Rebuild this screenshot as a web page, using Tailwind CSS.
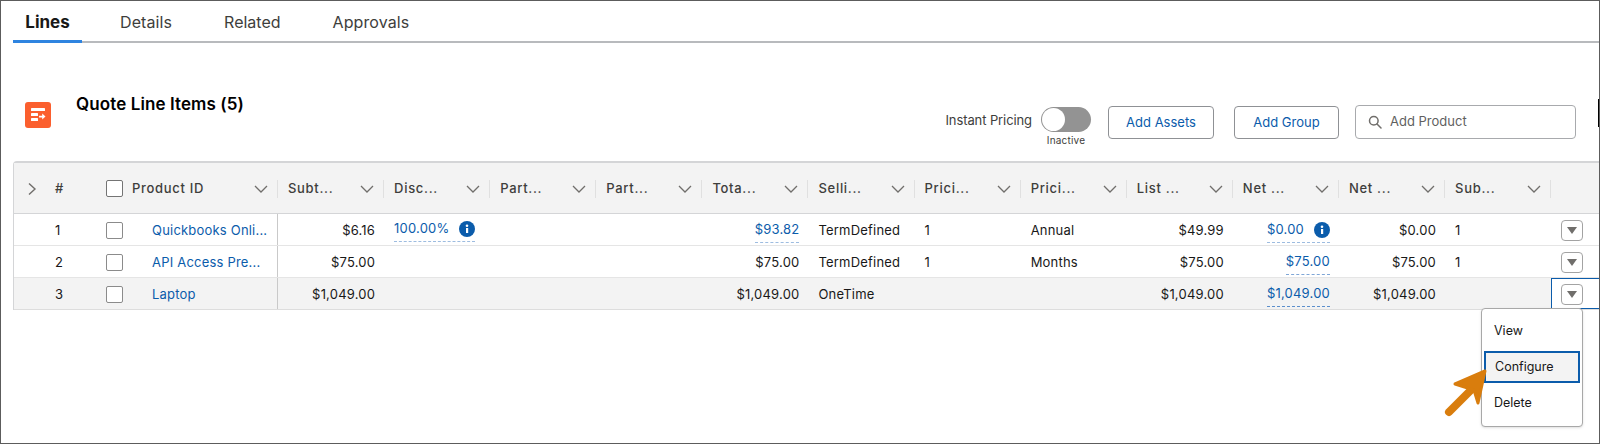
<!DOCTYPE html>
<html lang="en">
<head>
  <meta charset="UTF-8">
  <title>Quote Line Items</title>
  <script src="https://cdn.jsdelivr.net/npm/@tailwindcss/browser@4"></script>
</head>
<body class="bg-white font-['Inter',sans-serif] text-[13px] text-[#181818]">
  <div class="relative w-[1600px] h-[444px] overflow-hidden border border-[#5c5c5c]">

    <!-- tabs -->
    <div class="ml-3 h-[42px] flex items-start border-b-2 border-[#b8babd] text-[16px] text-[#3e3e3c]">
      <div class="w-[69px] h-[42px] pt-[9px] text-center text-[17px] font-bold text-[#181818] border-b-[3px] border-[#2e84e0]">Lines</div>
      <div class="ml-[38px] pt-[9px] tracking-[0.1px]">Details</div>
      <div class="ml-[52px] pt-[9px]">Related</div>
      <div class="ml-[52px] pt-[9px] tracking-[0.1px]">Approvals</div>
    </div>

    <!-- toolbar -->
    <div class="h-[118px] flex items-start pl-6 pr-[23px]">
      <div class="mt-[59px] w-[26px] h-[26px] rounded-[3px] bg-[#fb5f2e] flex items-center justify-center">
        <svg width="20" height="20" viewBox="0 0 20 20" fill="#fff">
          <rect x="3" y="3" width="14" height="3" rx="0.6"/>
          <rect x="3" y="8" width="7" height="3" rx="0.6"/>
          <rect x="3" y="13" width="7" height="3" rx="0.6"/>
          <path d="M11 10.7h3.2V8.6l3.3 3-3.3 3v-2.1H11z"/>
        </svg>
      </div>
      <div class="ml-[25px] mt-[49px] text-[17px] leading-[24px] font-semibold tracking-[0.1px] text-black">Quote Line Items (5)</div>
      <div class="ml-auto mt-[64px] flex items-start">
        <div class="mt-[3px] text-[13px] leading-[20px] tracking-[-0.1px] text-[#3e3e3c]">Instant Pricing</div>
        <div class="ml-[9px] w-[50px] flex flex-col items-center">
          <div class="w-[50px] h-[25px] rounded-full bg-[#939393] p-[1px]">
            <div class="w-[23px] h-[23px] rounded-full bg-white"></div>
          </div>
          <div class="mt-[1px] text-[10px] leading-[14px] tracking-[0.2px] text-[#3e3e3c]">Inactive</div>
        </div>
        <button class="ml-[17px] mt-[-1px] w-[106px] h-[33px] rounded border border-[#8f9195] text-[#0b5cab]">Add Assets</button>
        <button class="ml-[20px] mt-[-1px] w-[105px] h-[33px] rounded border border-[#8f9195] text-[#0b5cab]">Add Group</button>
        <div class="ml-[16px] mt-[-2px] w-[221px] h-[34px] rounded border border-[#a8aaad] flex items-center pl-3 text-[#5f5f5f]">
          <svg width="14" height="14" viewBox="0 0 14 14" fill="none" stroke="#706e6b" stroke-width="1.5"><circle cx="5.8" cy="5.8" r="4.3"/><path d="M9 9l4 4" stroke-linecap="round"/></svg>
          <span class="ml-[8px]">Add Product</span>
        </div>
      </div>
    </div>

    <!-- table -->
    <div class="ml-3 border-t-2 border-l border-[#d4d5d7] rounded-tl">
      <!-- header -->
      <div class="h-[51px] pt-[1px] grid grid-cols-[264px_repeat(12,106.1px)_1fr] items-center bg-[#f3f3f3] border-b border-[#d4d5d7] font-medium text-[#3e3e3c] tracking-[0.7px]">
        <div class="h-[18px] flex items-center border-r border-[#e0e0e0]">
          <svg class="ml-[12px]" width="12" height="14" viewBox="0 0 12 14" fill="none" stroke="#706e6b" stroke-width="1.4"><path d="M3 1.5l6 5.5-6 5.5"/></svg>
          <span class="ml-[17px]">#</span>
          <span class="ml-[42px] w-[17px] h-[17px] rounded-[2px] border border-[#747474] bg-white"></span>
          <span class="ml-[9px]">Product ID</span>
          <svg class="ml-auto mr-[9px]" width="14" height="8" viewBox="0 0 14 8" fill="none" stroke="#706e6b" stroke-width="1.3"><path d="M1 1l6 6 6-6"/></svg>
        </div>
        <div class="h-[18px] flex items-center pl-[10px] pr-[9px] justify-between border-r border-[#e0e0e0]">Subt...<svg width="14" height="8" viewBox="0 0 14 8" fill="none" stroke="#706e6b" stroke-width="1.3"><path d="M1 1l6 6 6-6"/></svg></div>
        <div class="h-[18px] flex items-center pl-[10px] pr-[9px] justify-between border-r border-[#e0e0e0]">Disc...<svg width="14" height="8" viewBox="0 0 14 8" fill="none" stroke="#706e6b" stroke-width="1.3"><path d="M1 1l6 6 6-6"/></svg></div>
        <div class="h-[18px] flex items-center pl-[10px] pr-[9px] justify-between border-r border-[#e0e0e0]">Part...<svg width="14" height="8" viewBox="0 0 14 8" fill="none" stroke="#706e6b" stroke-width="1.3"><path d="M1 1l6 6 6-6"/></svg></div>
        <div class="h-[18px] flex items-center pl-[10px] pr-[9px] justify-between border-r border-[#e0e0e0]">Part...<svg width="14" height="8" viewBox="0 0 14 8" fill="none" stroke="#706e6b" stroke-width="1.3"><path d="M1 1l6 6 6-6"/></svg></div>
        <div class="h-[18px] flex items-center pl-[10px] pr-[9px] justify-between border-r border-[#e0e0e0]">Tota...<svg width="14" height="8" viewBox="0 0 14 8" fill="none" stroke="#706e6b" stroke-width="1.3"><path d="M1 1l6 6 6-6"/></svg></div>
        <div class="h-[18px] flex items-center pl-[10px] pr-[9px] justify-between border-r border-[#e0e0e0]">Selli...<svg width="14" height="8" viewBox="0 0 14 8" fill="none" stroke="#706e6b" stroke-width="1.3"><path d="M1 1l6 6 6-6"/></svg></div>
        <div class="h-[18px] flex items-center pl-[10px] pr-[9px] justify-between border-r border-[#e0e0e0]">Prici...<svg width="14" height="8" viewBox="0 0 14 8" fill="none" stroke="#706e6b" stroke-width="1.3"><path d="M1 1l6 6 6-6"/></svg></div>
        <div class="h-[18px] flex items-center pl-[10px] pr-[9px] justify-between border-r border-[#e0e0e0]">Prici...<svg width="14" height="8" viewBox="0 0 14 8" fill="none" stroke="#706e6b" stroke-width="1.3"><path d="M1 1l6 6 6-6"/></svg></div>
        <div class="h-[18px] flex items-center pl-[10px] pr-[9px] justify-between border-r border-[#e0e0e0]">List ...<svg width="14" height="8" viewBox="0 0 14 8" fill="none" stroke="#706e6b" stroke-width="1.3"><path d="M1 1l6 6 6-6"/></svg></div>
        <div class="h-[18px] flex items-center pl-[10px] pr-[9px] justify-between border-r border-[#e0e0e0]">Net ...<svg width="14" height="8" viewBox="0 0 14 8" fill="none" stroke="#706e6b" stroke-width="1.3"><path d="M1 1l6 6 6-6"/></svg></div>
        <div class="h-[18px] flex items-center pl-[10px] pr-[9px] justify-between border-r border-[#e0e0e0]">Net ...<svg width="14" height="8" viewBox="0 0 14 8" fill="none" stroke="#706e6b" stroke-width="1.3"><path d="M1 1l6 6 6-6"/></svg></div>
        <div class="h-[18px] flex items-center pl-[10px] pr-[9px] justify-between border-r border-[#e0e0e0]">Sub...<svg width="14" height="8" viewBox="0 0 14 8" fill="none" stroke="#706e6b" stroke-width="1.3"><path d="M1 1l6 6 6-6"/></svg></div>
        <div></div>
      </div>

      <!-- row 1 -->
      <div class="h-[32px] pt-[2px] grid grid-cols-[264px_repeat(12,106.1px)_1fr] items-center border-b border-[#e5e5e5] tracking-[0.2px]">
        <div class="self-stretch -mt-[2px] pt-[2px] flex items-center border-r border-[#c9c9c9]">
          <span class="ml-[41px] w-[10px]">1</span>
          <span class="ml-[41px] w-[17px] h-[17px] rounded-[2px] border border-[#8b8b8b]"></span>
          <span class="ml-[29px] text-[#0b5cab]">Quickbooks Onli...</span>
        </div>
        <div class="text-right pr-[9px]">$6.16</div>
        <div class="pl-[10px] flex items-center"><span class="flex items-center pb-[2px] border-b border-dashed border-[#9dbce0]"><span class="text-[#0b5cab]">100.00%</span><svg class="ml-[10px]" width="16" height="16" viewBox="0 0 16 16"><circle cx="8" cy="8" r="8" fill="#0b5cab"/><rect x="7" y="7" width="2.2" height="5" fill="#fff"/><circle cx="8" cy="4.8" r="1.3" fill="#fff"/></svg></span></div>
        <div></div>
        <div></div>
        <div class="justify-self-end mr-[9px] pb-[2px] border-b border-dashed border-[#9dbce0] text-[#0b5cab] translate-y-[1px]">$93.82</div>
        <div class="pl-[10px]">TermDefined</div>
        <div class="pl-[10px]">1</div>
        <div class="pl-[10px]">Annual</div>
        <div class="text-right pr-[9px]">$49.99</div>
        <div class="justify-self-end mr-[9px] flex items-center pb-[2px] border-b border-dashed border-[#9dbce0] translate-y-[1px]"><span class="text-[#0b5cab]">$0.00</span><svg class="ml-[10px]" width="16" height="16" viewBox="0 0 16 16"><circle cx="8" cy="8" r="8" fill="#0b5cab"/><rect x="7" y="7" width="2.2" height="5" fill="#fff"/><circle cx="8" cy="4.8" r="1.3" fill="#fff"/></svg></div>
        <div class="text-right pr-[9px]">$0.00</div>
        <div class="pl-[10px]">1</div>
        <div class="pl-[10px]"><span class="w-[22px] h-[21px] rounded border border-[#a3a3a3] flex items-center justify-center"><svg width="10" height="7" viewBox="0 0 10 7" fill="#706e6b"><path d="M0 0h10L5 7z"/></svg></span></div>
      </div>

      <!-- row 2 -->
      <div class="h-[32px] pt-[2px] grid grid-cols-[264px_repeat(12,106.1px)_1fr] items-center border-b border-[#e5e5e5] tracking-[0.2px]">
        <div class="self-stretch -mt-[2px] pt-[2px] flex items-center border-r border-[#c9c9c9]">
          <span class="ml-[41px] w-[10px]">2</span>
          <span class="ml-[41px] w-[17px] h-[17px] rounded-[2px] border border-[#8b8b8b]"></span>
          <span class="ml-[29px] text-[#0b5cab]">API Access Pre...</span>
        </div>
        <div class="text-right pr-[9px]">$75.00</div>
        <div></div>
        <div></div>
        <div></div>
        <div class="text-right pr-[9px]">$75.00</div>
        <div class="pl-[10px]">TermDefined</div>
        <div class="pl-[10px]">1</div>
        <div class="pl-[10px]">Months</div>
        <div class="text-right pr-[9px]">$75.00</div>
        <div class="justify-self-end mr-[9px] pb-[2px] border-b border-dashed border-[#7fa6d6] text-[#0b5cab] translate-y-[1px]">$75.00</div>
        <div class="text-right pr-[9px]">$75.00</div>
        <div class="pl-[10px]">1</div>
        <div class="pl-[10px]"><span class="w-[22px] h-[21px] rounded border border-[#a3a3a3] flex items-center justify-center"><svg width="10" height="7" viewBox="0 0 10 7" fill="#706e6b"><path d="M0 0h10L5 7z"/></svg></span></div>
      </div>

      <!-- row 3 -->
      <div class="h-[32px] pt-[2px] grid grid-cols-[264px_repeat(12,106.1px)_1fr] items-center bg-[#f3f3f3] border-b border-[#dddddd] tracking-[0.2px]">
        <div class="self-stretch -mt-[2px] pt-[2px] flex items-center border-r border-[#c9c9c9]">
          <span class="ml-[41px] w-[10px]">3</span>
          <span class="ml-[41px] w-[17px] h-[17px] rounded-[2px] border border-[#8b8b8b] bg-white"></span>
          <span class="ml-[29px] text-[#0b5cab]">Laptop</span>
        </div>
        <div class="text-right pr-[9px]">$1,049.00</div>
        <div></div>
        <div></div>
        <div></div>
        <div class="text-right pr-[9px]">$1,049.00</div>
        <div class="pl-[10px]">OneTime</div>
        <div></div>
        <div></div>
        <div class="text-right pr-[9px]">$1,049.00</div>
        <div class="justify-self-end mr-[9px] pb-[2px] border-b border-dashed border-[#5c8fcc] text-[#0b5cab] translate-y-[1px]">$1,049.00</div>
        <div class="text-right pr-[9px]">$1,049.00</div>
        <div></div>
        <div class="self-stretch -mt-[2px] pt-[2px] pl-[9px] flex items-center bg-white border border-r-0 border-[#0b5cab]"><span class="w-[22px] h-[21px] rounded border border-[#a3a3a3] flex items-center justify-center"><svg width="10" height="7" viewBox="0 0 10 7" fill="#706e6b"><path d="M0 0h10L5 7z"/></svg></span></div>
      </div>
    </div>

    <!-- row actions menu -->
    <div class="absolute left-[1480px] top-[307px] w-[102px] h-[119px] bg-white rounded border border-[#a8a8a8] shadow-sm px-[2px] pt-[7px] text-[12.5px]">
      <div class="h-[30px] pl-[10px] flex items-center">View</div>
      <div class="mt-[5px] h-[32px] pl-[9px] flex items-center bg-[#f3f3f3] border-2 border-[#0b5cab]">Configure</div>
      <div class="mt-[5px] h-[30px] pl-[10px] flex items-center">Delete</div>
    </div>

    <!-- annotation arrow -->
    <svg class="absolute left-[1440px] top-[360px]" width="52" height="60" viewBox="0 0 52 60" fill="none" stroke="#d97d0d" stroke-linecap="round" stroke-linejoin="round">
      <path d="M8 51L36 23" stroke-width="8"/>
      <path d="M14 23L44 10L37 42L33 29z" fill="#d97d0d" stroke-width="3"/>
    </svg>

    <div class="absolute right-0 top-[98px] w-[1px] h-[28px] bg-black"></div>
  </div>
</body>
</html>
